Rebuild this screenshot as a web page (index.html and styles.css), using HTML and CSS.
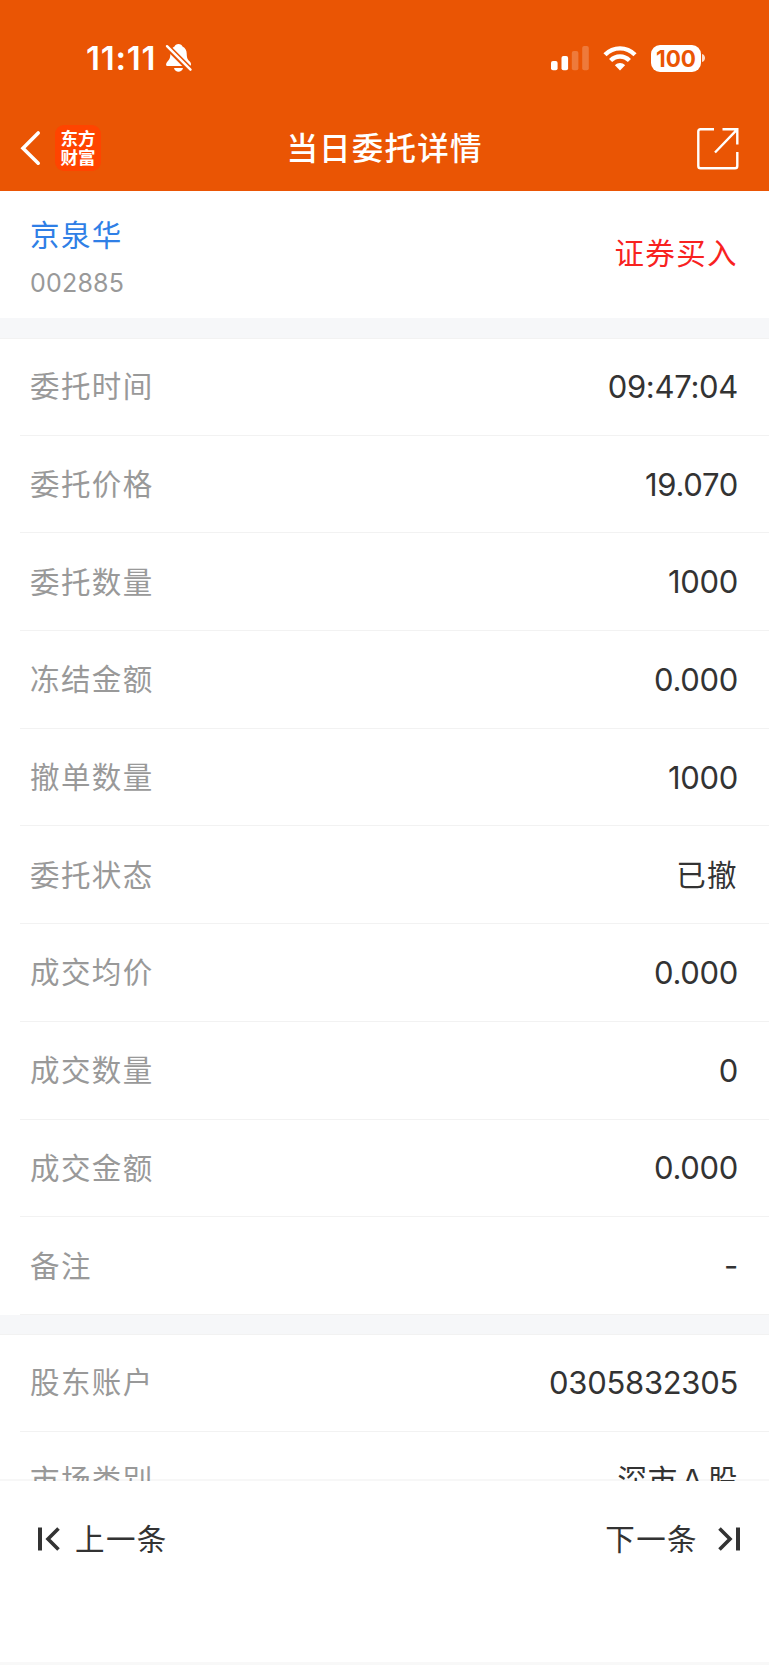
FILE: index.html
```html
<!DOCTYPE html>
<html lang="zh-CN">
<head>
  <title>当日委托详情</title>
  <meta charset="UTF-8">
  <meta name="viewport" content="width=device-width, initial-scale=1.0">
  <link rel="stylesheet" href="styles.css">
</head>
<body>
  <header class="header">
    <!-- Status bar -->
    <div class="status">
      <span class="time">11:11</span>
      <svg class="bell" width="28" height="30" viewBox="0 0 28 30">
        <path fill="#fff" d="M13.5 1C11.5 1 10 2 9.5 3.5C6.500 5 5.500 7.500 5.400 10.500C5.300 15 4.500 16.500 2.500 18.500C0.800 20.200 0.500 23 2.500 23H24.500C26.500 23 26.500 20.200 24.800 18.500C22.500 16.500 21.800 15 21.700 10.500C21.600 7.500 20.500 5 17.500 3.500C17 2 15.500 1 13.500 1ZM9 25H18C17.500 27.500 15.500 28.800 13.500 28.800C11.500 28.800 9.500 27.500 9 25Z"/>
        <path stroke="#ea5504" stroke-width="6" d="M0 1.500L27 28.500"/>
        <path stroke="#fff" stroke-width="2.400" stroke-linecap="round" d="M2 3.200L25.500 26.700"/>
      </svg>
      <svg class="signal" width="38" height="25" viewBox="0 0 38 25" fill="#fff">
        <rect x="0" y="15" width="6.600" height="9.300" rx="2"/>
        <rect x="10.500" y="10" width="6.600" height="14.300" rx="2"/>
        <rect x="20.800" y="5" width="6.600" height="19.300" rx="2" opacity=".22"/>
        <rect x="31.200" y="0" width="6.600" height="24.300" rx="2" opacity=".22"/>
      </svg>
      <svg class="wifi" width="34" height="25" viewBox="0 0 34 25" fill="none">
        <path stroke="#fff" stroke-width="4.400" d="M2 8.700C10.500 0.200 23.500 0.200 32 8.700"/>
        <path stroke="#fff" stroke-width="4.400" d="M7.600 14.500C13 9.200 21 9.200 26.400 14.500"/>
        <path fill="#fff" d="M17 24.500L11.900 19.200C14.800 16.400 19.200 16.400 22.100 19.200Z"/>
      </svg>
      <span class="battery">100</span>
      <svg class="battery-tip" width="4" height="8" viewBox="0 0 4 8"><path fill="#fff" fill-opacity=".8" d="M0 0C4 1 4 7 0 8Z"/></svg>
    </div>

    <!-- Title bar -->
    <div class="navbar">
      <div class="nav-left">
        <svg class="back" width="21" height="36" viewBox="0 0 21 36" fill="none">
          <path stroke="#fff" stroke-width="3.600" stroke-linecap="round" d="M18.200 3L3 18.200L18.200 33.200"/>
        </svg>
        <div class="logo">东方<br>财富</div>
      </div>
      <h1>当日委托详情</h1>
      <svg class="share" width="42" height="42" viewBox="0 0 42 42" fill="none" stroke="#fff" stroke-width="2.400">
        <path d="M17 1.300H3.500Q1.300 1.300 1.300 3.500V38Q1.300 40.300 3.500 40.300H38Q40.300 40.300 40.300 38V24"/>
        <path d="M25.500 1.300H40.300V16.500M40 1.600L18 24.500"/>
      </svg>
    </div>
  </header>

  <main class="content">
    <section class="stock">
      <div>
        <div class="stock-name">京泉华</div>
        <div class="stock-code">002885</div>
      </div>
      <div class="side">证券买入</div>
    </section>

    <section class="group">
      <div class="row"><span class="label">委托时间</span><span class="value">09:47:04</span></div>
      <div class="row"><span class="label">委托价格</span><span class="value">19.070</span></div>
      <div class="row"><span class="label">委托数量</span><span class="value">1000</span></div>
      <div class="row"><span class="label">冻结金额</span><span class="value">0.000</span></div>
      <div class="row"><span class="label">撤单数量</span><span class="value">1000</span></div>
      <div class="row"><span class="label">委托状态</span><span class="value cn">已撤</span></div>
      <div class="row"><span class="label">成交均价</span><span class="value">0.000</span></div>
      <div class="row"><span class="label">成交数量</span><span class="value">0</span></div>
      <div class="row"><span class="label">成交金额</span><span class="value">0.000</span></div>
      <div class="row"><span class="label">备注</span><span class="value">-</span></div>
    </section>

    <section class="group account">
      <div class="row"><span class="label">股东账户</span><span class="value">0305832305</span></div>
      <div class="row"><span class="label">市场类别</span><span class="value cn market">深市Ａ股</span></div>
    </section>
  </main>

  <footer class="footer">
    <div class="pager">
      <svg width="22" height="24" viewBox="0 0 22 24" fill="none" stroke="#333">
        <path stroke-width="4" d="M2 0.500V23.500"/>
        <path stroke-width="3.600" d="M20.500 1.500L10 12L20.500 22.500"/>
      </svg>
      <span>上一条</span>
    </div>
    <div class="pager next">
      <span>下一条</span>
      <svg width="22" height="24" viewBox="0 0 22 24" fill="none" stroke="#333">
        <path stroke-width="4" d="M20 0.500V23.500"/>
        <path stroke-width="3.600" d="M1.500 1.500L12 12L1.500 22.500"/>
      </svg>
    </div>
  </footer>
</body>
</html>
```
FILE: styles.css
```css
* { box-sizing: border-box; }
body { margin: 0; height: 1665px; display: flex; flex-direction: column; overflow: hidden; background: #fff; color: #333; font-family: Inter, "Noto Sans CJK SC", sans-serif; }
svg { display: block; flex: none; }

.header { flex: none; height: 191px; background: #ea5504; color: #fff; }
.status { height: 106px; padding: 10px 63px 0 86px; display: flex; align-items: center; }
.time { font-size: 33px; font-weight: 600; letter-spacing: 0.8px; line-height: 40px; }
.bell { margin-left: 9px; }
.signal { margin-left: auto; }
.wifi { margin-left: 14px; }
.battery { width: 50px; height: 27px; margin-left: 14px; border-radius: 9px; background: #fff; color: #ea5504; font-size: 22.5px; font-weight: 700; line-height: 27px; text-align: center; }
.battery-tip { margin-left: 1px; }

.navbar { height: 85px; padding: 0 30px 0 20px; display: grid; grid-template-columns: 1fr auto 1fr; align-items: center; }
.nav-left { display: flex; align-items: center; gap: 14px; padding-bottom: 2px; }
.logo { width: 46px; height: 46px; padding-top: 4px; border-radius: 9px; background: #ff4400; font-size: 17.5px; font-weight: 700; line-height: 19px; text-align: center; }
h1 { margin: 0 0 0 10px; font-size: 31.5px; font-weight: 500; letter-spacing: 1.2px; line-height: 40px; }
.share { justify-self: end; }

.content { flex: none; height: 1290px; overflow: hidden; }
.stock { height: 127px; padding: 2px 31px 0 30px; display: flex; align-items: center; justify-content: space-between; }
.stock-name { color: #2f7fe6; font-size: 29.5px; letter-spacing: 1.4px; line-height: 44px; }
.stock-code { margin-top: 9px; padding-bottom: 0; color: #999; font-size: 25px; letter-spacing: 0.2px; line-height: 34px; }
.stock > div:first-child { padding-top: 2px; }
.side { padding-bottom: 9px; color: #f8221f; font-size: 29.5px; letter-spacing: 1.4px; }

.group { border-top: 20px solid #f6f7f9; box-shadow: inset 0 1px #f2f2f2; }
.account { border-top-width: 19px; }
.row { height: 97.7px; margin-left: 20px; padding: 0 31px 0 10px; border-bottom: 1px solid #f2f2f2; display: flex; align-items: center; justify-content: space-between; }
.label { padding-bottom: 4px; color: #999; font-size: 29.5px; letter-spacing: 1.4px; }
.value { font-size: 31px; letter-spacing: -0.3px; }
.cn { padding-bottom: 4px; font-size: 29.5px; letter-spacing: 1.4px; }
.market { letter-spacing: 0.6px; }

.footer { position: relative; flex: none; height: 186px; margin-top: -2px; padding: 33px 29px 0 38px; border-top: 2px solid rgba(0,0,0,0.03); border-bottom: 3px solid #f8f8f8; background: #fff; background-clip: padding-box; display: flex; align-items: flex-start; justify-content: space-between; }
.pager { display: flex; align-items: center; gap: 15px; font-size: 29.5px; letter-spacing: 1.4px; line-height: 50px; }
.next { gap: 20px; }
```
